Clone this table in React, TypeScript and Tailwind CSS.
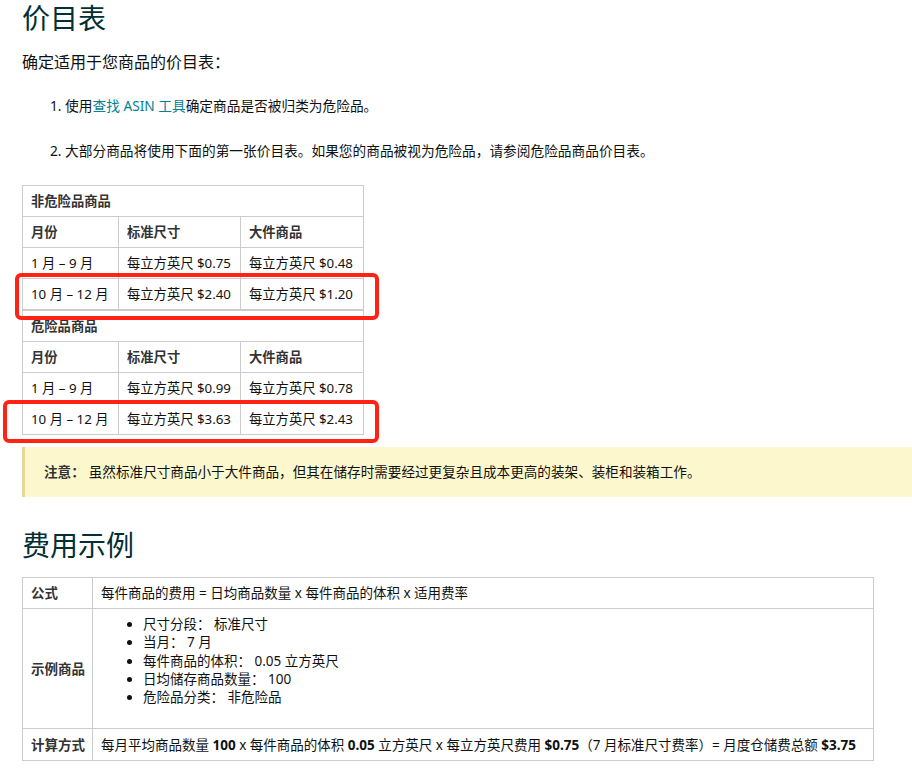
const font = {
  fontFamily: '"Noto Sans", "Noto Sans CJK SC", sans-serif',
};

const cell =
  "border border-[#cccccc] px-[8px] py-0 h-[31px] align-middle text-left whitespace-nowrap overflow-hidden";

function FeeTable({ title, rows }: { title: string; rows: string[][] }) {
  return (
    <table className="table-fixed border-collapse w-[341px] text-[13.3px] leading-[18px] text-[#0f1111]">
      <colgroup>
        <col className="w-[96px]" />
        <col className="w-[122px]" />
        <col className="w-[123px]" />
      </colgroup>
      <tbody>
        <tr>
          <td colSpan={3} className={cell + " font-bold text-[#333]"}>
            {title}
          </td>
        </tr>
        <tr>
          <td className={cell + " font-bold text-[#333]"}>月份</td>
          <td className={cell + " font-bold text-[#333]"}>标准尺寸</td>
          <td className={cell + " font-bold text-[#333]"}>大件商品</td>
        </tr>
        {rows.map((r) => (
          <tr key={r[0]}>
            <td className={cell}>{r[0]}</td>
            <td className={cell}>{r[1]}</td>
            <td className={cell}>{r[2]}</td>
          </tr>
        ))}
      </tbody>
    </table>
  );
}

export default function App() {
  return (
    <div style={font} className="relative w-[912px] min-h-[769px] bg-white pl-[22px] text-[#0f1111] overflow-hidden">
      <h1 className="text-[28px] leading-[36px] text-[#002f36] m-0">价目表</h1>
      <p className="mt-[14px] text-[16px] leading-[24px]">确定适用于您商品的价目表：</p>
      <ol className="mt-[20px] list-decimal list-inside pl-[28px] text-[13.7px] leading-[24px]">
        <li>
          使用<span className="text-[#008296]">查找 ASIN 工具</span>确定商品是否被归类为危险品。
        </li>
        <li className="mt-[21px]">
          大部分商品将使用下面的第一张价目表。如果您的商品被视为危险品，请参阅危险品商品价目表。
        </li>
      </ol>

      <div className="mt-[22px]">
        <FeeTable
          title="非危险品商品"
          rows={[
            ["1 月 – 9 月", "每立方英尺 $0.75", "每立方英尺 $0.48"],
            ["10 月 – 12 月", "每立方英尺 $2.40", "每立方英尺 $1.20"],
          ]}
        />
        <FeeTable
          title="危险品商品"
          rows={[
            ["1 月 – 9 月", "每立方英尺 $0.99", "每立方英尺 $0.78"],
            ["10 月 – 12 月", "每立方英尺 $3.63", "每立方英尺 $2.43"],
          ]}
        />
      </div>

      <div className="mt-[12px] h-[50px] w-[890px] bg-[#fdf7cd] border-l-[3px] border-[#e6d89a] flex items-center pl-[19px] text-[13.6px] text-[#0f1111]">
        <span className="font-bold text-[#333]">注意：</span>
        <span className="ml-[4px]">虽然标准尺寸商品小于大件商品，但其在储存时需要经过更复杂且成本更高的装架、装柜和装箱工作。</span>
      </div>

      <h2 className="mt-[30px] text-[28px] leading-[36px] text-[#002f36]">费用示例</h2>

      <table className="mt-[14px] table-fixed border-collapse w-[852px] text-[13.5px] leading-[18px]">
        <colgroup>
          <col className="w-[70px]" />
          <col />
        </colgroup>
        <tbody>
          <tr>
            <td className="border border-[#cccccc] h-[31px] px-[8px] font-bold text-[#333] whitespace-nowrap">公式</td>
            <td className="border border-[#cccccc] px-[8px] whitespace-nowrap">
              每件商品的费用 = 日均商品数量 x 每件商品的体积 x 适用费率
            </td>
          </tr>
          <tr>
            <td className="border border-[#cccccc] h-[120px] px-[8px] font-bold text-[#333] align-middle whitespace-nowrap">示例商品</td>
            <td className="border border-[#cccccc] px-[8px] align-top pt-[6px]">
              <ul className="list-disc pl-[42px] leading-[18.3px]">
                <li>尺寸分段： 标准尺寸</li>
                <li>当月： 7 月</li>
                <li>每件商品的体积： 0.05 立方英尺</li>
                <li>日均储存商品数量： 100</li>
                <li>危险品分类： 非危险品</li>
              </ul>
            </td>
          </tr>
          <tr>
            <td className="border border-[#cccccc] h-[32px] px-[8px] font-bold text-[#333] whitespace-nowrap">计算方式</td>
            <td className="border border-[#cccccc] px-[8px] whitespace-nowrap">
              每月平均商品数量 <b>100</b> x 每件商品的体积 <b>0.05</b> 立方英尺 x 每立方英尺费用 <b>$0.75</b>（7 月标准尺寸费率）= 月度仓储费总额 <b>$3.75</b>
            </td>
          </tr>
        </tbody>
      </table>

      {/* red annotation boxes */}
      <div className="absolute left-[15px] top-[273px] w-[364px] h-[47px] border-[4px] border-[#ff2215] rounded-[6px]" />
      <div className="absolute left-[3px] top-[400px] w-[376px] h-[43px] border-[4px] border-[#ff2215] rounded-[6px]" />
    </div>
  );
}
